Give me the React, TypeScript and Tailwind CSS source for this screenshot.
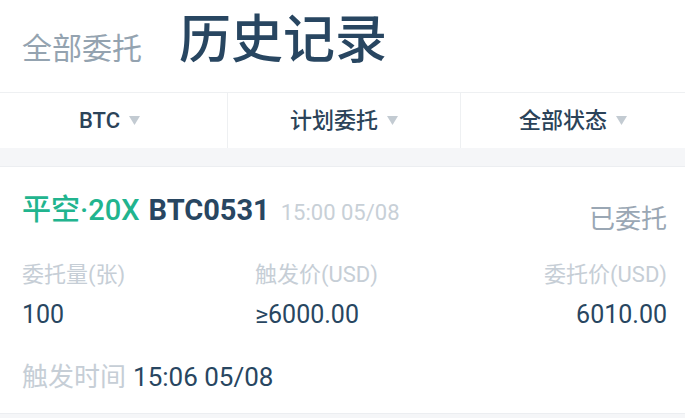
import React from "react";

const font = { fontFamily: "Roboto, 'Noto Sans CJK SC', sans-serif" };

function Tri() {
  return (
    <svg width="11" height="9" viewBox="0 0 11 9" className="ml-[9px]">
      <path d="M0 0 H11 L5.5 9 Z" fill="#c3cbd2" />
    </svg>
  );
}

export default function App() {
  return (
    <div className="w-[685px] h-[418px] bg-white overflow-hidden flex flex-col" style={font}>
      <div className="h-[92px] shrink-0 flex items-center pl-[22px]">
        <span className="text-[30px] text-[#94a3b0] leading-[36px] mt-[6px]">全部委托</span>
        <span className="text-[52px] font-medium text-[#284661] leading-[60px] ml-[37px] -mt-[10px]">历史记录</span>
      </div>
      <div className="h-[56px] shrink-0 grid grid-cols-[228px_233px_1fr] bg-white border-t border-[#eef0f2]">
        <div className="flex items-center justify-center border-r border-[#eef0f2] text-[22px] font-medium text-[#2b4359] pr-[8px]">
          BTC<Tri />
        </div>
        <div className="flex items-center justify-center border-r border-[#eef0f2] text-[22px] font-medium text-[#2b4359]">
          计划委托<Tri />
        </div>
        <div className="flex items-center justify-center text-[22px] font-medium text-[#2b4359]">
          全部状态<Tri />
        </div>
      </div>
      <div className="h-[19px] shrink-0 bg-[#f5f6f8] border-b border-[#eceef1]" />
      <div className="pl-[20px] pr-[18px] border-b border-[#eceef1] h-[247px] shrink-0">
        <div className="flex items-start justify-between pt-[27px]">
          <div className="flex items-baseline leading-[32px] pl-[2px]">
            <span className="text-[29px] font-medium text-[#21b48e]">平空·20X</span>
            <span className="text-[29px] font-bold text-[#284661] ml-[9px]">BTC0531</span>
            <span className="text-[22px] text-[#c8d0d7] ml-[11px]">15:00 05/08</span>
          </div>
          <span className="text-[26px] leading-[32px] text-[#9aa7b4] mt-[9px]">已委托</span>
        </div>
        <div className="grid grid-cols-[233px_1fr_1fr] mt-[25px] text-[22px] leading-[30px] text-[#c6ced6] pl-[2px]">
          <span>委托量(张)</span>
          <span>触发价(USD)</span>
          <span className="text-right">委托价(USD)</span>
        </div>
        <div className="grid grid-cols-[233px_1fr_1fr] mt-[10px] text-[25px] leading-[30px] text-[#284661] pl-[2px]">
          <span>100</span>
          <span>≥6000.00</span>
          <span className="text-right">6010.00</span>
        </div>
        <div className="mt-[32px] flex items-baseline leading-[30px] pl-[2px]">
          <span className="text-[26px] text-[#c6ced6]">触发时间</span>
          <span className="text-[26px] text-[#284661] ml-[7px]">15:06 05/08</span>
        </div>
      </div>
      <div className="bg-[#f5f6f8] flex-1" />
    </div>
  );
}
